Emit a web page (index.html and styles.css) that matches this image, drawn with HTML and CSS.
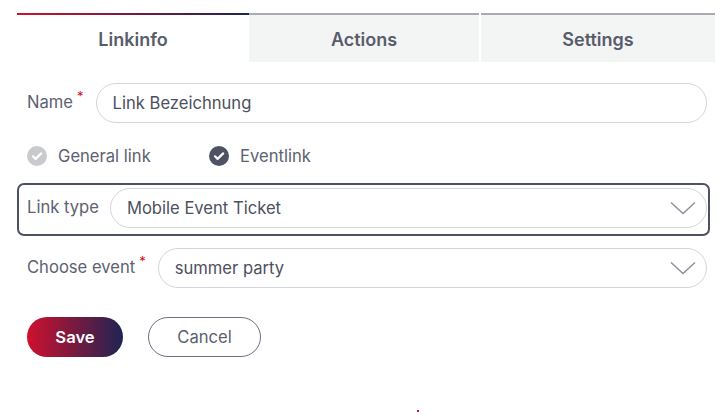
FILE: index.html
```html
<!DOCTYPE html>
<html lang="en">
<head>
    <meta charset="UTF-8">
    <meta name="viewport" content="width=device-width, initial-scale=1.0">
    <title>Link bearbeiten</title>
    <link rel="stylesheet" href="styles.css">
</head>
<body>

    <div class="panel">
        <div class="tabs">
            <div class="tab active">Linkinfo</div>
            <div class="tab">Actions</div>
            <div class="tab">Settings</div>
        </div>

        <div class="form">
            <div class="row">
                <label class="label">Name<span class="req">*</span></label>
                <div class="field">Link Bezeichnung</div>
            </div>

            <div class="radios">
                <div class="radio">
                    <span class="check check-off">
                        <svg viewBox="0 0 20 20" width="20" height="20"><path d="M6 10.3l2.6 2.6L14.2 7.4" fill="none" stroke="#fff" stroke-width="2.2" stroke-linecap="round" stroke-linejoin="round"/></svg>
                    </span>
                    General link
                </div>
                <div class="radio">
                    <span class="check check-on">
                        <svg viewBox="0 0 20 20" width="20" height="20"><path d="M6 10.3l2.6 2.6L14.2 7.4" fill="none" stroke="#fff" stroke-width="2.2" stroke-linecap="round" stroke-linejoin="round"/></svg>
                    </span>
                    Eventlink
                </div>
            </div>

            <div class="row focused">
                <label class="label">Link type</label>
                <div class="field select">
                    Mobile Event Ticket
                    <svg class="chevron" viewBox="0 0 26 14" width="26" height="14"><path d="M1 1.5l12 11 12-11" fill="none" stroke="#8c8f9b" stroke-width="1.4"/></svg>
                </div>
            </div>

            <div class="row">
                <label class="label">Choose event<span class="req">*</span></label>
                <div class="field select">
                    summer party
                    <svg class="chevron" viewBox="0 0 26 14" width="26" height="14"><path d="M1 1.5l12 11 12-11" fill="none" stroke="#8c8f9b" stroke-width="1.4"/></svg>
                </div>
            </div>

            <div class="buttons">
                <button class="btn btn-save">Save</button>
                <button class="btn btn-cancel">Cancel</button>
            </div>
        </div>
    </div>

    <span class="dot"></span>

</body>
</html>
```

FILE: styles.css
```css
body {
    font-family: Inter, "Noto Sans", sans-serif;
    background-color: #fff;
    color: #5b5f6e;
    margin: 0;
    padding: 0;
}

.panel {
    width: 700px;
    margin: 13px 0 0 17px;
}

.tabs {
    display: grid;
    grid-template-columns: 232px 230px 236px;
}

.tab {
    height: 49px;
    box-sizing: border-box;
    border-top: 2px solid #a8aab4;
    background-color: #f3f4f4;
    font-size: 18px;
    font-weight: 600;
    color: #585c6b;
    display: flex;
    align-items: center;
    justify-content: center;
    padding-top: 2px;
}

.tab:last-child {
    margin-left: 2px;
}

.tab.active {
    background-color: #fff;
    border-top: none;
    background-image: linear-gradient(90deg, #d0102c, #1d2452);
    background-size: 100% 2px;
    background-repeat: no-repeat;
    padding-top: 4px;
}

.form {
    padding-top: 21px;
}

.row {
    display: flex;
    align-items: center;
    padding-left: 10px;
    margin-right: 10px;
    margin-bottom: 12px;
}

.label {
    font-size: 16.6px;
    line-height: 20px;
    color: #5d6170;
    margin-right: 12px;
    margin-top: -2px;
    white-space: nowrap;
}

.req {
    position: relative;
    top: -7px;
    color: #d0102c;
    font-size: 13px;
    line-height: 1;
    margin-left: 4px;
}

.field {
    flex: 1;
    height: 40px;
    box-sizing: border-box;
    border: 1px solid #d4d5d9;
    border-radius: 20px;
    padding: 0 16px;
    font-size: 16.6px;
    color: #4c5060;
    display: flex;
    align-items: center;
}

.select {
    justify-content: space-between;
    padding-right: 10px;
}

.chevron {
    display: block;
}

.radios {
    display: flex;
    padding-left: 10px;
    margin-top: 23px;
    margin-bottom: 17px;
}

.radio {
    display: flex;
    align-items: center;
    font-size: 16.6px;
    color: #5d6170;
    width: 182px;
}

.check {
    width: 20px;
    height: 20px;
    border-radius: 50%;
    margin-right: 11px;
    display: block;
}

.check svg {
    display: block;
}

.check-off {
    background-color: #c9cacd;
}

.check-on {
    background-color: #4e5263;
}

.focused {
    border: 2px solid #4d5263;
    border-radius: 7px;
    margin-right: 7px;
    padding: 3px 1px 6px 8px;
    margin-bottom: 12px;
}

.focused .label {
    margin-right: 11px;
}

.buttons {
    display: flex;
    gap: 25px;
    padding-left: 10px;
    margin-top: 29px;
}

.btn {
    height: 40px;
    border-radius: 20px;
    font-family: Inter, "Noto Sans", sans-serif;
    font-size: 16.6px;
    cursor: pointer;
}

.btn-save {
    width: 96px;
    border: none;
    color: #fff;
    font-weight: 600;
    background-image: linear-gradient(90deg, #cf102d, #1e2453);
}

.btn-cancel {
    width: 113px;
    background-color: #fff;
    border: 1.5px solid #6b6f80;
    color: #5b5f6e;
}

.dot {
    position: absolute;
    left: 417px;
    top: 410px;
    width: 2px;
    height: 2px;
    background-color: #d0102c;
}
```
